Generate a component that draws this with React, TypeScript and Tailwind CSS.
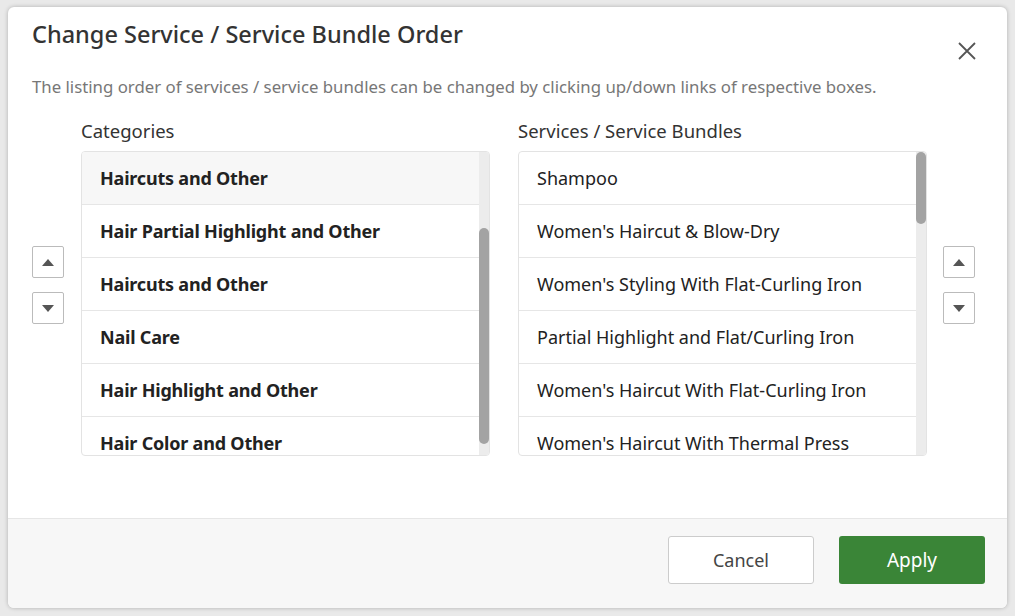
import React from "react";

const cats = ["Haircuts and Other","Hair Partial Highlight and Other","Haircuts and Other","Nail Care","Hair Highlight and Other","Hair Color and Other"];
const svcs = ["Shampoo","Women's Haircut & Blow-Dry","Women's Styling With Flat-Curling Iron","Partial Highlight and Flat/Curling Iron","Women's Haircut With Flat-Curling Iron","Women's Haircut With Thermal Press"];

function Arrows() {
  return (
    <div className="flex flex-col gap-[14px] self-start mt-[129px]">
      {[0,1].map(i => (
        <button key={i} className="w-[32px] h-[32px] border border-[#bbb] rounded-[2px] bg-white flex items-center justify-center">
          <svg width="12" height="7" viewBox="0 0 12 7">
            <path d={i===0 ? "M0 7 L6 0 L12 7 Z" : "M0 0 L6 7 L12 0 Z"} fill="#555" />
          </svg>
        </button>
      ))}
    </div>
  );
}

function List({ items, bold, thumbTop, thumbH, firstSel }: { items: string[]; bold: boolean; thumbTop: number; thumbH: number; firstSel?: boolean }) {
  return (
    <div className="relative w-[409px] h-[305px] border border-[#e3e3e3] rounded-[4px] overflow-hidden bg-white">
      <div className="mr-[10px]">
        {items.map((t, i) => (
          <div key={i} className={`h-[53px] flex items-center pl-[18px] border-b border-[#e6e6e6] text-[18px] text-[#222] ${bold ? "font-bold tracking-[-0.2px]" : ""} ${firstSel && i===0 ? "bg-[#f7f7f7]" : ""}`}>{t}</div>
        ))}
      </div>
      <div className="absolute right-0 top-0 bottom-0 w-[10px] bg-[#ececec]">
        <div className="absolute left-0 right-0 rounded-[5px] bg-[#a3a3a3]" style={{ top: thumbTop, height: thumbH }} />
      </div>
    </div>
  );
}

export default function App() {
  return (
    <div className="w-[1015px] h-[616px] bg-[#e9e9e9] p-[7px_8px_8px_8px] font-['Open_Sans',sans-serif]">
      <div className="w-[999px] h-[601px] bg-white rounded-[6px] shadow-[0_0_4px_rgba(0,0,0,0.25)] flex flex-col overflow-hidden">
        <div className="flex-1 flex flex-col pl-[24px] pr-[32px]">
          <div className="flex items-start justify-between pt-[10px]">
            <h1 className="text-[23.5px] text-[#333] font-medium">Change Service / Service Bundle Order</h1>
            <svg className="mt-[24px] -mr-[2px]" width="20" height="20" viewBox="0 0 20 20"><path d="M2 2 L18 18 M18 2 L2 18" stroke="#555" strokeWidth="1.8" /></svg>
          </div>
          <p className="mt-[13px] text-[16.8px] text-[#777]">The listing order of services / service bundles can be changed by clicking up/down links of respective boxes.</p>
          <div className="flex mt-[18px]">
            <Arrows />
            <div className="ml-[17px]">
              <div className="text-[18.5px] text-[#333] h-[34px]">Categories</div>
              <List items={cats} bold thumbTop={76} thumbH={216} firstSel />
            </div>
            <div className="ml-[28px] mr-[16px]">
              <div className="text-[18.5px] text-[#333] h-[34px]">Services / Service Bundles</div>
              <List items={svcs} bold={false} thumbTop={0} thumbH={72} />
            </div>
            <Arrows />
          </div>
        </div>
        <div className="h-[90px] bg-[#f7f7f7] border-t border-[#e6e6e6] flex items-start pt-[17px] justify-end gap-[25px] pr-[22px]">
          <button className="w-[146px] h-[48px] bg-white border border-[#ccc] rounded-[3px] text-[18px] text-[#444]">Cancel</button>
          <button className="w-[146px] h-[48px] bg-[#3a8537] rounded-[3px] text-[19px] text-white">Apply</button>
        </div>
      </div>
    </div>
  );
}
